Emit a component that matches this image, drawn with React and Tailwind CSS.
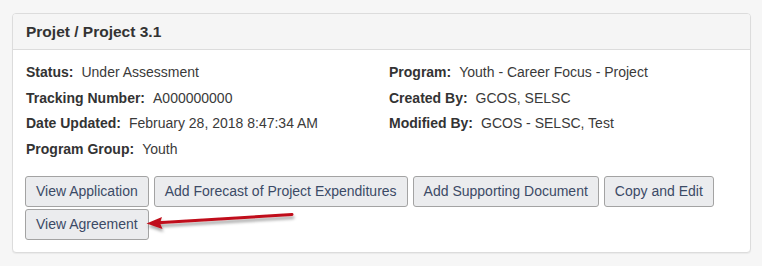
export default function App() {
  const left = [
    ["Status:", "Under Assessment"],
    ["Tracking Number:", "A000000000"],
    ["Date Updated:", "February 28, 2018 8:47:34 AM"],
    ["Program Group:", "Youth"],
  ];
  const right = [
    ["Program:", "Youth - Career Focus - Project"],
    ["Created By:", "GCOS, SELSC"],
    ["Modified By:", "GCOS - SELSC, Test"],
  ];
  const buttons = [
    "View Application",
    "Add Forecast of Project Expenditures",
    "Add Supporting Document",
    "Copy and Edit",
    "View Agreement",
  ];
  const Row = ({ l, v }) => (
    <div className="leading-[25.5px] whitespace-nowrap">
      <span className="font-bold text-[#333]">{l}</span>
      <span className="ml-2 text-[#3a3a3a]">{v}</span>
    </div>
  );
  return (
    <div
      className="relative w-[762px] h-[266px] bg-[#f6f6f6] pt-[13px] pl-[12px] pr-[11px] text-[14px]"
      style={{ fontFamily: '"Liberation Sans", Arial, sans-serif' }}
    >
      <div className="border border-[#dcdcdc] rounded-[4px] bg-white shadow-[0_1px_1px_rgba(0,0,0,0.05)] overflow-hidden">
        <div className="h-[36px] bg-[#f5f5f5] border-b border-[#dcdcdc] flex items-center px-[13px]">
          <span className="font-bold text-[15.5px] text-[#333]">Projet / Project 3.1</span>
        </div>
        <div className="px-[13px] pt-[10px] pb-[12px]">
          <div className="grid grid-cols-[363px_1fr]">
            <div>
              {left.map(([l, v]) => (
                <Row key={l} l={l} v={v} />
              ))}
            </div>
            <div>
              {right.map(([l, v]) => (
                <Row key={l} l={l} v={v} />
              ))}
            </div>
          </div>
          <div className="mt-[14px] -ml-px flex flex-wrap gap-x-[5px] gap-y-[2px]">
            {buttons.map((b) => (
              <button
                key={b}
                className="h-[31px] px-[10px] border border-[#a3a3a3] rounded-[3px] bg-[#ebecee] text-[#3b4a66] text-[14px] whitespace-nowrap"
              >
                {b}
              </button>
            ))}
          </div>
        </div>
      </div>
      <svg
        className="absolute left-0 top-0 pointer-events-none"
        width="762"
        height="266"
        viewBox="0 0 762 266"
      >
        <defs>
          <filter id="sh" x="-20%" y="-50%" width="140%" height="200%">
            <feDropShadow dx="1" dy="3" stdDeviation="1.6" floodColor="#000" floodOpacity="0.35" />
          </filter>
        </defs>
        <g filter="url(#sh)">
          <line x1="292" y1="214.5" x2="158" y2="222.8" stroke="#c0101a" strokeWidth="3" strokeLinecap="round" />
          <polygon points="146.5,223.5 162,217 160,223 162.5,229" fill="#c0101a" />
        </g>
      </svg>
    </div>
  );
}
